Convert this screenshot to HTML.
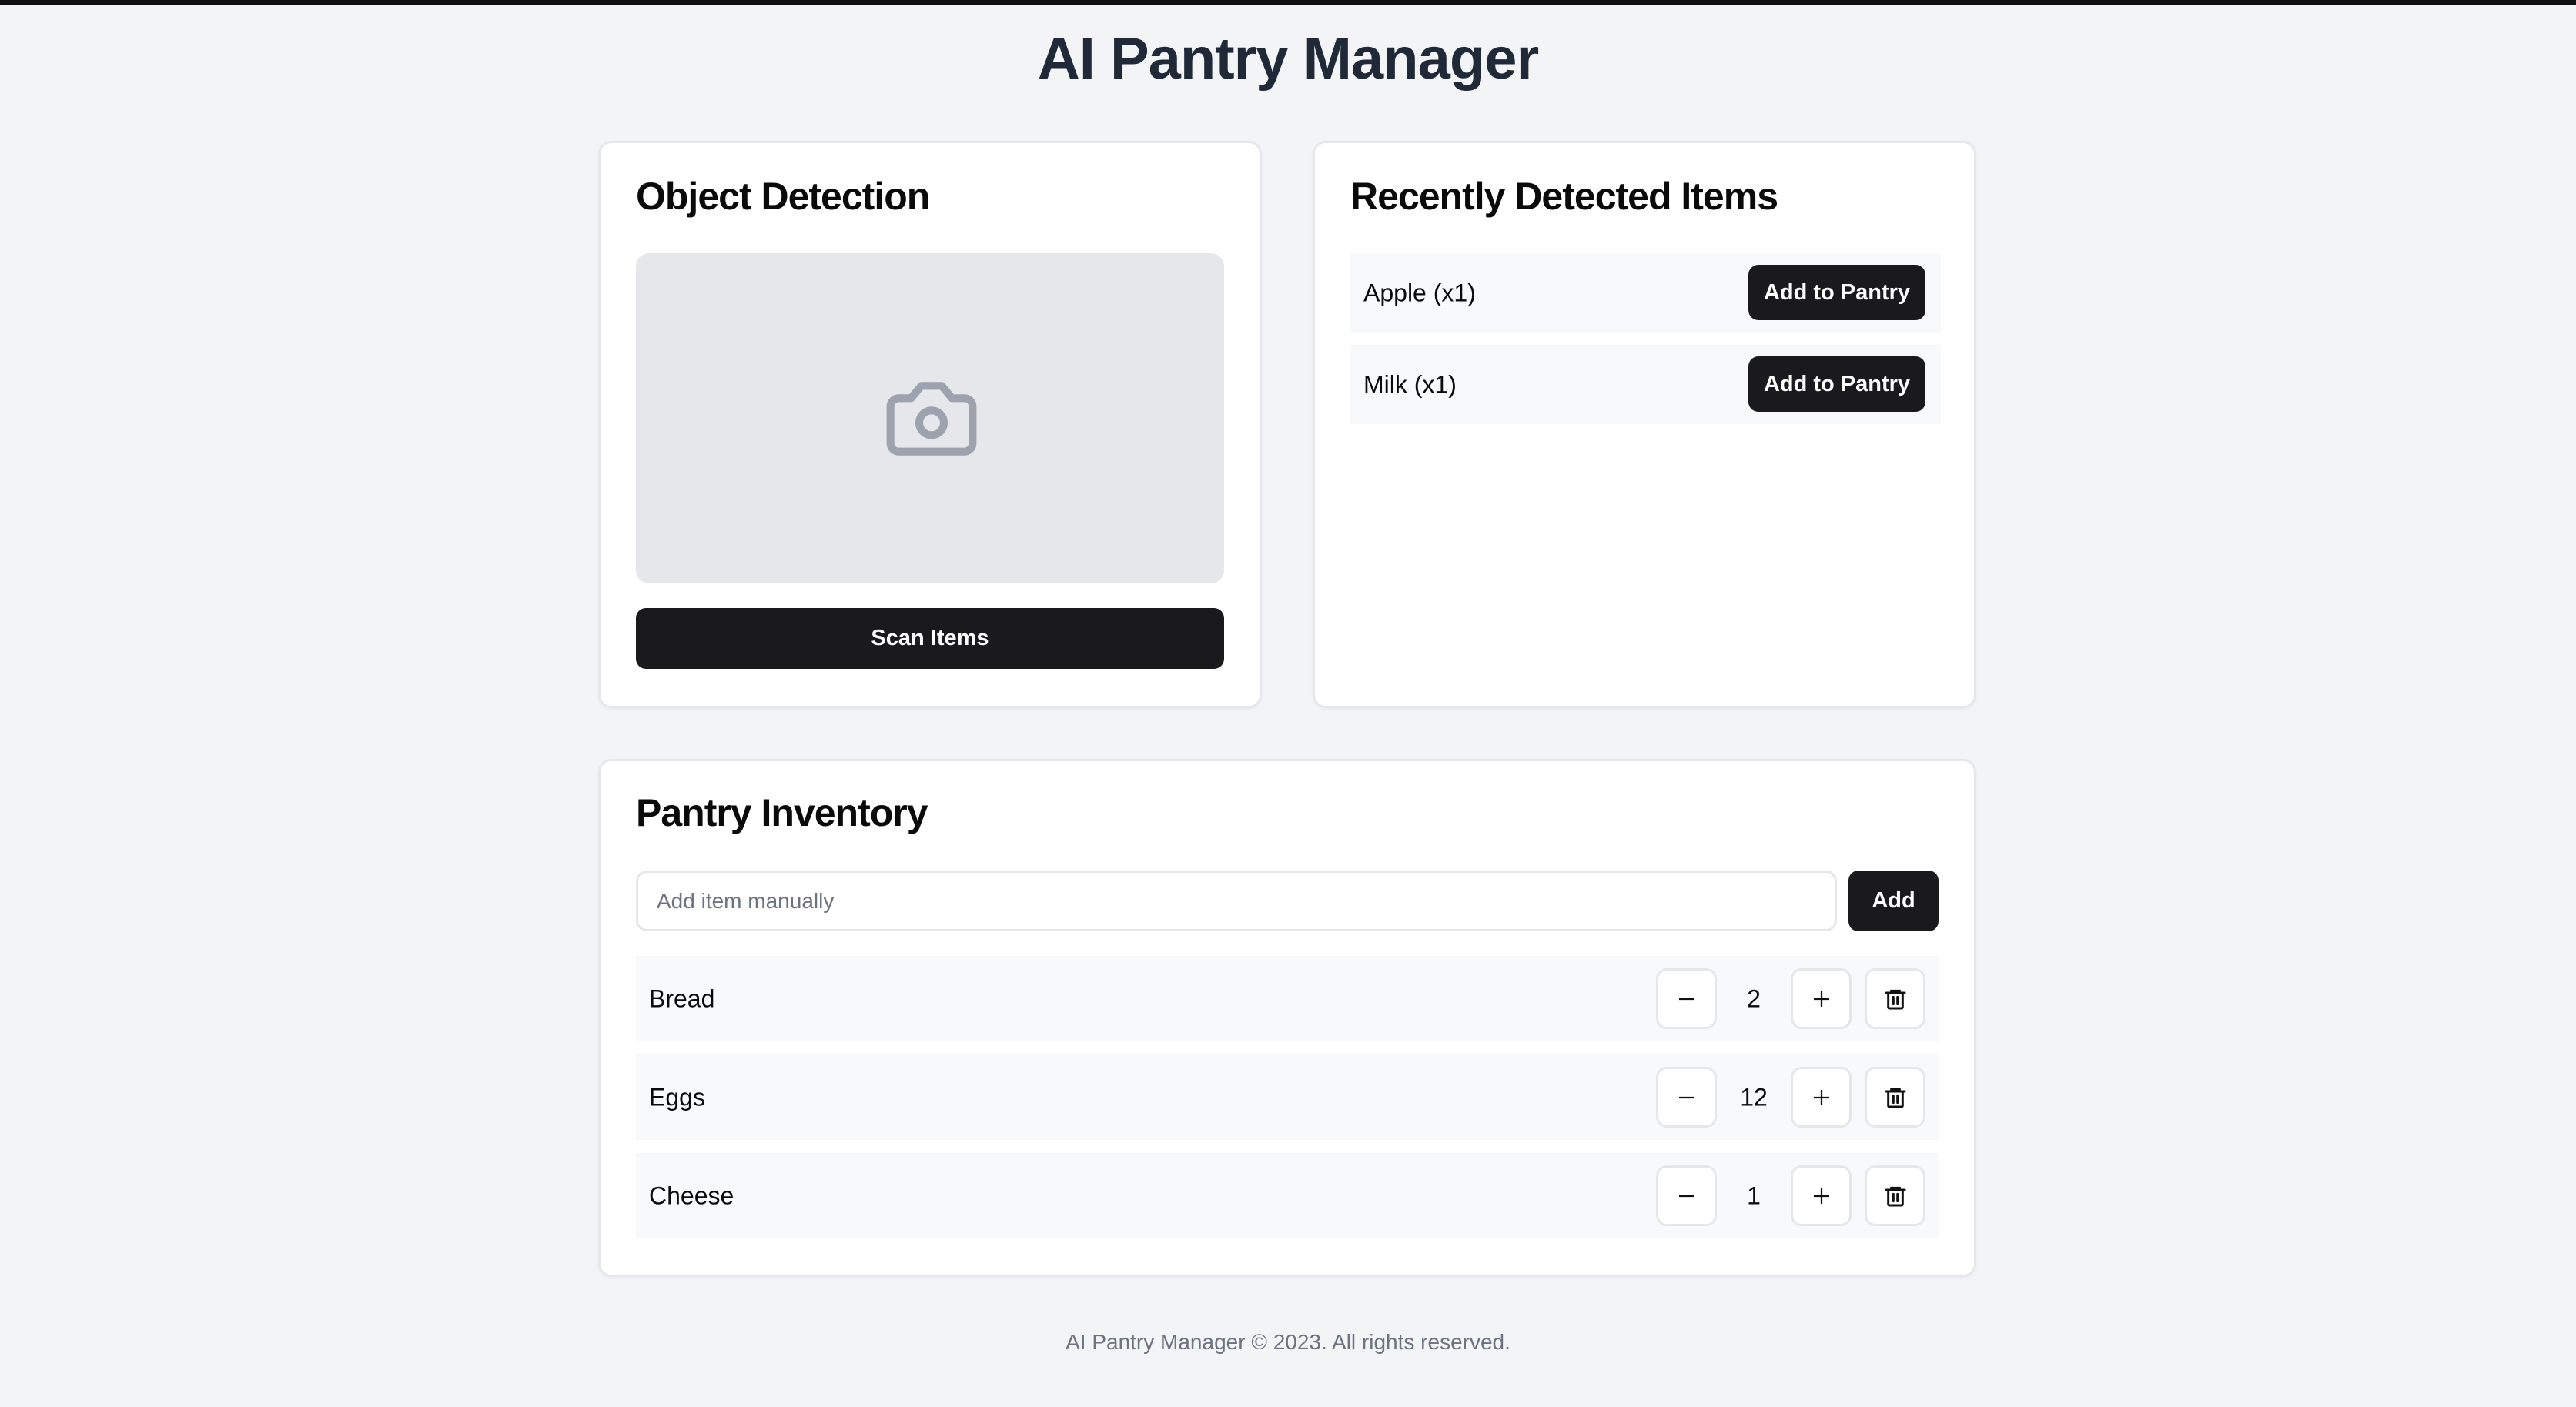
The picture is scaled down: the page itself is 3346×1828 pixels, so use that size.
<!DOCTYPE html>
<html><head><meta charset="utf-8"><style>
*{box-sizing:border-box;margin:0;padding:0}
html,body{width:3346px;height:1828px;overflow:hidden}
body{background:#f3f4f6;font-family:"Liberation Sans",sans-serif;position:relative;color:#0a0a0a}
.topbar{position:absolute;left:0;top:0;width:3346px;height:6px;background:#111}
h1{position:absolute;top:33px;left:0;width:100%;text-align:center;font-size:76px;font-weight:700;color:#1f2937;letter-spacing:-1px}
.card{position:absolute;background:#fff;border:3px solid #e5e7eb;border-radius:17px;box-shadow:0 2px 4px rgba(0,0,0,.04)}
h2{position:absolute;left:46px;font-size:50px;font-weight:700;letter-spacing:-1px}
.abs{position:absolute}
.btn{position:absolute;background:#1a1a1c;color:#fff;border-radius:13px;font-weight:600;font-size:29px;display:flex;align-items:center;justify-content:center}
.row{position:absolute;background:#f8f9fb}
.rtxt{position:absolute;font-size:32px;top:50%;transform:translateY(-50%)}
.sq{position:absolute;width:79px;height:79px;border:3px solid #e5e7eb;border-radius:14px;background:#fff;display:flex;align-items:center;justify-content:center}
.num{position:absolute;width:60px;text-align:center;font-size:32px;top:50%;transform:translateY(-50%)}
</style></head><body>
<div class="topbar"></div>
<h1>AI Pantry Manager</h1>

<div class="card" style="left:777px;top:183px;width:862px;height:737px">
  <h2 style="top:40px">Object Detection</h2>
  <div class="abs" style="left:46px;top:143px;width:764px;height:429px;background:#e5e7eb;border-radius:17px"></div>
  <svg class="abs" style="left:366px;top:294px" width="128" height="128" viewBox="0 0 24 24" fill="none" stroke="#9ca3af" stroke-width="1.9" stroke-linecap="round" stroke-linejoin="round"><path d="M14.5 4h-5L7 7H4a2 2 0 0 0-2 2v9a2 2 0 0 0 2 2h16a2 2 0 0 0 2-2V9a2 2 0 0 0-2-2h-3l-2.5-3z"/><circle cx="12" cy="13" r="3"/></svg>
  <div class="btn" style="left:46px;top:604px;width:764px;height:79px">Scan Items</div>
</div>

<div class="card" style="left:1705px;top:183px;width:862px;height:737px">
  <h2 style="top:40px">Recently Detected Items</h2>
  <div class="row" style="left:46px;top:143px;width:767px;height:103px">
    <div class="rtxt" style="left:17px">Apple (x1)</div>
    <div class="btn" style="left:517px;top:15px;width:230px;height:72px">Add to Pantry</div>
  </div>
  <div class="row" style="left:46px;top:262px;width:767px;height:103px">
    <div class="rtxt" style="left:17px">Milk (x1)</div>
    <div class="btn" style="left:517px;top:15px;width:230px;height:72px">Add to Pantry</div>
  </div>
</div>

<div class="card" style="left:777px;top:986px;width:1790px;height:673px">
  <h2 style="top:38px">Pantry Inventory</h2>
  <div class="abs" style="left:46px;top:142px;width:1560px;height:79px;border:3px solid #e5e7eb;border-radius:14px;font-size:28px;color:#6b7280;padding-left:24px;line-height:73px">Add item manually</div>
  <div class="btn" style="left:1621px;top:142px;width:117px;height:79px">Add</div>

  <div class="row" style="left:46px;top:253px;width:1692px;height:111px">
    <div class="rtxt" style="left:17px">Bread</div>
    <div class="sq" style="left:1325px;top:16px"><svg width="30" height="30" viewBox="0 0 24 24" stroke="#111" stroke-width="1.8"><path d="M4 12h16"/></svg></div>
    <div class="num" style="left:1422px">2</div>
    <div class="sq" style="left:1500px;top:16px"><svg width="30" height="30" viewBox="0 0 24 24" stroke="#111" stroke-width="1.8"><path d="M4 12h16M12 4v16"/></svg></div>
    <div class="sq" style="left:1596px;top:16px"><svg width="32" height="32" viewBox="0 0 24 24" fill="none" stroke="#111" stroke-width="2.2" stroke-linecap="round"><path d="M3 6h18M8 6V4h8v2M5 6v14a1 1 0 0 0 1 1h12a1 1 0 0 0 1-1V6M10 10v7M14 10v7"/></svg></div>
  </div>
  <div class="row" style="left:46px;top:381px;width:1692px;height:111px">
    <div class="rtxt" style="left:17px">Eggs</div>
    <div class="sq" style="left:1325px;top:16px"><svg width="30" height="30" viewBox="0 0 24 24" stroke="#111" stroke-width="1.8"><path d="M4 12h16"/></svg></div>
    <div class="num" style="left:1422px">12</div>
    <div class="sq" style="left:1500px;top:16px"><svg width="30" height="30" viewBox="0 0 24 24" stroke="#111" stroke-width="1.8"><path d="M4 12h16M12 4v16"/></svg></div>
    <div class="sq" style="left:1596px;top:16px"><svg width="32" height="32" viewBox="0 0 24 24" fill="none" stroke="#111" stroke-width="2.2" stroke-linecap="round"><path d="M3 6h18M8 6V4h8v2M5 6v14a1 1 0 0 0 1 1h12a1 1 0 0 0 1-1V6M10 10v7M14 10v7"/></svg></div>
  </div>
  <div class="row" style="left:46px;top:509px;width:1692px;height:111px">
    <div class="rtxt" style="left:17px">Cheese</div>
    <div class="sq" style="left:1325px;top:16px"><svg width="30" height="30" viewBox="0 0 24 24" stroke="#111" stroke-width="1.8"><path d="M4 12h16"/></svg></div>
    <div class="num" style="left:1422px">1</div>
    <div class="sq" style="left:1500px;top:16px"><svg width="30" height="30" viewBox="0 0 24 24" stroke="#111" stroke-width="1.8"><path d="M4 12h16M12 4v16"/></svg></div>
    <div class="sq" style="left:1596px;top:16px"><svg width="32" height="32" viewBox="0 0 24 24" fill="none" stroke="#111" stroke-width="2.2" stroke-linecap="round"><path d="M3 6h18M8 6V4h8v2M5 6v14a1 1 0 0 0 1 1h12a1 1 0 0 0 1-1V6M10 10v7M14 10v7"/></svg></div>
  </div>
</div>

<div class="abs" style="top:1728px;left:0;width:100%;text-align:center;font-size:28px;color:#6b7280">AI Pantry Manager © 2023. All rights reserved.</div>
</body></html>
